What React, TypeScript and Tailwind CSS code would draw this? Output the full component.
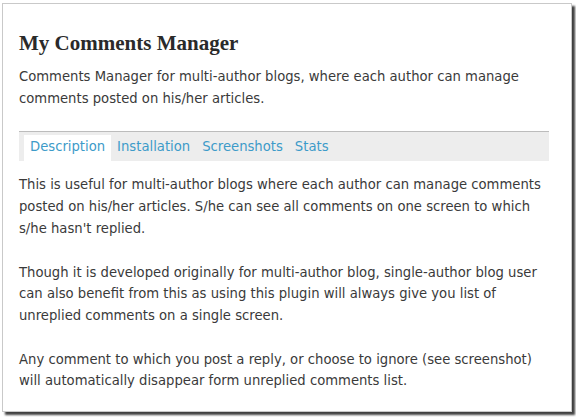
import React from "react";

const tabs = ["Description", "Installation", "Screenshots", "Stats"];

export default function App() {
  return (
    <div className="w-[576px] h-[417px] bg-white pl-[2px] pt-[3px]">
      <div className="w-[570px] h-[409px] border border-[#c9c9c9] bg-white shadow-[3px_3px_2px_rgba(0,0,0,0.75)] px-[16px] pt-[26px] text-[#3a3a3a] font-['DejaVu_Sans',Verdana,sans-serif] text-[13.2px] leading-[21.7px]">
        <h1 className="font-['Liberation_Serif',Georgia,serif] font-bold text-[21px] leading-[26px] text-[#2a2a2a]">
          My Comments Manager
        </h1>
        <p className="mt-[10px] pr-[20px]">
          Comments Manager for multi-author blogs, where each author can manage comments posted on his/her articles.
        </p>
        <div className="mt-[22px] mr-[6px] border-t border-[#bcbcbc] bg-[#ededed] h-[30px] flex items-end pl-[5px]">
          {tabs.map((t, i) => (
            <div
              key={t}
              className={
                i === 0
                  ? "bg-white h-[26px] px-[6px] leading-[24px] text-[#3d9bc9]"
                  : "h-[26px] px-[6px] leading-[24px] text-[#3d9bc9]"
              }
            >
              {t}
            </div>
          ))}
        </div>
        <div className="pt-[13px] pr-[6px]">
          <p>
            This is useful for multi-author blogs where each author can manage comments posted on his/her articles. S/he can see all comments on one screen to which s/he hasn't replied.
          </p>
          <p className="mt-[22px]">
            Though it is developed originally for multi-author blog, single-author blog user can also benefit from this as using this plugin will always give you list of unreplied comments on a single screen.
          </p>
          <p className="mt-[22px]">
            Any comment to which you post a reply, or choose to ignore (see screenshot) will automatically disappear form unreplied comments list.
          </p>
        </div>
      </div>
    </div>
  );
}
